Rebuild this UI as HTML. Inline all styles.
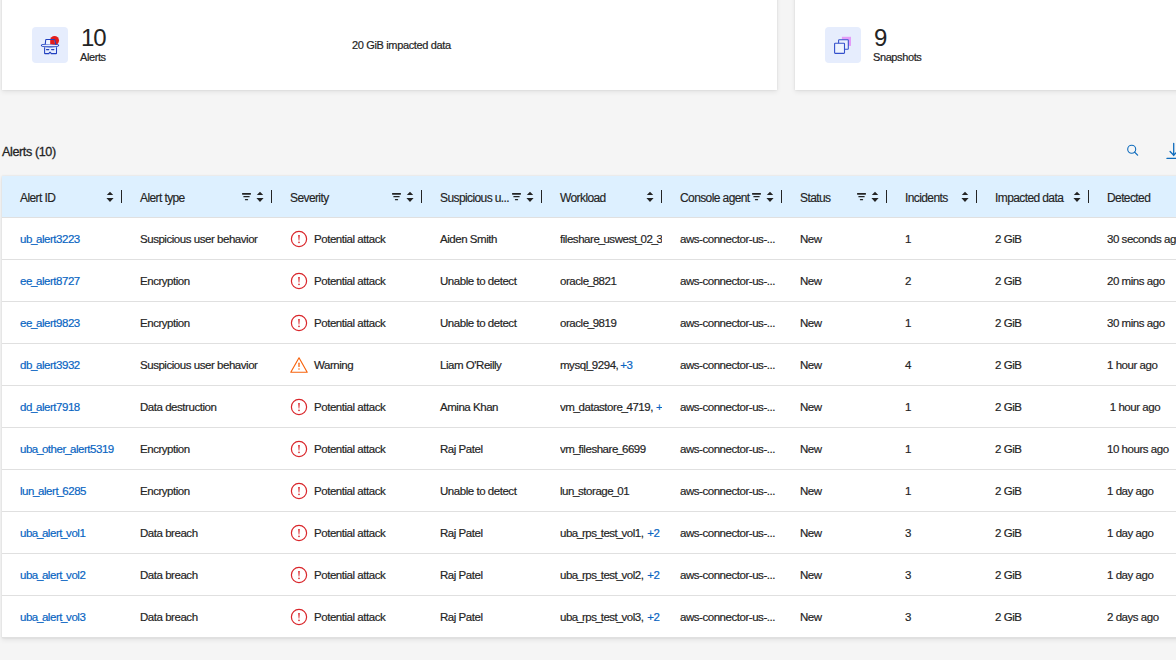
<!DOCTYPE html>
<html><head><meta charset="utf-8"><style>
*{box-sizing:border-box}
html,body{margin:0;padding:0}
body{width:1176px;height:660px;overflow:hidden;position:relative;background:#f5f5f5;font-family:"Liberation Sans",sans-serif;color:#242424}
.a{position:absolute;white-space:nowrap}
.card{position:absolute;background:#fff;box-shadow:0 0 2px rgba(0,0,0,.09),0 2px 5px rgba(0,0,0,.08)}
.ibox{position:absolute;width:36px;height:36px;border-radius:4px;background:#e6edfd}
.tbl{position:absolute;left:2px;top:176px;width:1200px;height:462px;background:#fff;box-shadow:0 0 2px rgba(0,0,0,.09),0 2px 5px rgba(0,0,0,.08)}
.hdr{position:absolute;left:0;top:0;width:1200px;height:42px;background:#ddf0ff;border-bottom:1px solid #e0e0e0}
.row{position:absolute;left:0;width:1200px;height:42px;border-bottom:1px solid #e0e0e0}
.ht{position:absolute;top:2px;height:41px;line-height:41px;font-size:12px;letter-spacing:-0.6px;color:#242424;white-space:nowrap;-webkit-text-stroke:0.15px #242424}
.bt{position:absolute;top:1px;height:41px;line-height:41px;font-size:11.5px;letter-spacing:-0.46px;color:#242424;white-space:nowrap;-webkit-text-stroke:0.18px currentColor}
.clip{overflow:hidden}
.lnk{color:#0864c2}
.u{margin-left:-0.9px;letter-spacing:-1.4px}
.div{position:absolute;top:14px;width:1.2px;height:13px;background:#242424}
.ic{position:absolute}
.ic svg{display:block}
</style></head><body>

<div class="card" style="left:2px;top:-10px;width:775px;height:100px"></div>
<div class="card" style="left:795px;top:-10px;width:400px;height:100px"></div>
<div class="ibox" style="left:32px;top:27px"><svg width="36" height="36" viewBox="0 0 36 36" style="position:absolute;left:0;top:0"><circle cx="22.55" cy="13.45" r="4.5" fill="#e31b1b"/><ellipse cx="18" cy="18.4" rx="8.7" ry="1.45" fill="none" stroke="#2140c0" stroke-width="1.05"/><path d="M13.85 17.3 L14.2 13 L22.3 13 L23.2 17.3 Z" fill="#eef3fe"/><path d="M18.2 13 L22.3 13 L23.2 17.3 L18.2 17.3 Z" fill="#e31b1b"/><path d="M13.3 17.1 L13.7 12.9 C13.75 12.6 13.9 12.5 14.2 12.5 L22.3 12.5 C22.6 12.5 22.75 12.7 22.8 13 L23.7 17.2" fill="none" stroke="#2140c0" stroke-width="1.05" stroke-linejoin="round"/><path d="M12.6 20.3 L12.6 26.2 C12.6 26.5 12.8 26.6 13.1 26.6 L16.9 26.6 L17.7 25.3 L18.4 25.3 L19.2 26.6 L24 26.6 C24.3 26.6 24.5 26.5 24.5 26.2 L24.5 20.3" fill="none" stroke="#2140c0" stroke-width="1.05" stroke-linejoin="round"/><path d="M14.5 22.6 H16.8 M19.6 22.6 H21.9" stroke="#2140c0" stroke-width="1.1" stroke-linecap="round"/></svg></div>
<div class="a" style="left:81px;top:24px;font-size:24px;line-height:28px;letter-spacing:-1.2px;color:#242424">10</div>
<div class="a" style="left:80px;top:51px;font-size:11px;line-height:13px;letter-spacing:-0.4px;color:#242424;-webkit-text-stroke:0.2px #242424">Alerts</div>
<div class="a" style="left:352px;top:39px;font-size:11px;line-height:13px;letter-spacing:-0.35px;color:#242424;-webkit-text-stroke:0.2px #242424">20 GiB impacted data</div>
<div class="ibox" style="left:825px;top:27px"><svg width="36" height="36" viewBox="0 0 36 36" style="position:absolute;left:0;top:0"><rect x="16.9" y="9.8" width="9.1" height="9.1" fill="#e39cf8"/><rect x="13.6" y="12.7" width="9.7" height="9.6" rx=".6" fill="#eaf0fe" stroke="#3450cc" stroke-width="1.05"/><rect x="9.6" y="16.3" width="9.9" height="10.1" rx=".6" fill="#eef3fe" stroke="#3450cc" stroke-width="1.1"/></svg></div>
<div class="a" style="left:874px;top:24px;font-size:24px;line-height:28px;color:#242424">9</div>
<div class="a" style="left:873px;top:51px;font-size:11px;line-height:13px;letter-spacing:-0.4px;color:#242424;-webkit-text-stroke:0.2px #242424">Snapshots</div>
<div class="a" style="left:2px;top:145px;font-size:12.6px;line-height:14px;letter-spacing:-0.4px;color:#242424;-webkit-text-stroke:0.3px #242424">Alerts (10)</div>
<svg class="ic" style="left:1124px;top:141px" width="18" height="18" viewBox="0 0 18 18"><circle cx="7.7" cy="8.2" r="4.0" fill="none" stroke="#0f6cbd" stroke-width="1.1"/><path d="M10.6 11.1 L13.6 14.1" stroke="#0f6cbd" stroke-width="1.3" stroke-linecap="round"/></svg>
<svg class="ic" style="left:1160px;top:140px" width="16" height="20" viewBox="0 0 16 20"><path d="M13.7 3.3 V15.5 M10.1 11.5 L13.7 15.2 L17.3 11.5" fill="none" stroke="#0f6cbd" stroke-width="1.3" stroke-linecap="round"/><path d="M7 18.4 H20" stroke="#0f6cbd" stroke-width="1.4" stroke-linecap="round"/></svg>
<div class="tbl">
<div class="hdr">
<div class="ht" style="left:18px">Alert ID</div>
<div class="div" style="left:119.0px"></div>
<div class="ic" style="left:104.0px;top:15px"><svg width="8" height="12" viewBox="0 0 8 12"><path d="M4 0.8 L7.2 3.9 L0.8 3.9 Z M0.4 7.1 L7.6 7.1 L4 10.9 Z" fill="#242424"/></svg></div>
<div class="ht" style="left:138px">Alert type</div>
<div class="div" style="left:269.0px"></div>
<div class="ic" style="left:254.0px;top:15px"><svg width="8" height="12" viewBox="0 0 8 12"><path d="M4 0.8 L7.2 3.9 L0.8 3.9 Z M0.4 7.1 L7.6 7.1 L4 10.9 Z" fill="#242424"/></svg></div>
<div class="ic" style="left:240.0px;top:16px"><svg width="10" height="9" viewBox="0 0 10 9"><rect x="0" y="1" width="9" height="1.7" rx=".6" fill="#242424"/><rect x="1.3" y="4" width="6.4" height="1.3" rx=".5" fill="#242424"/><rect x="2.9" y="7.1" width="3.2" height="1.2" rx=".5" fill="#242424"/></svg></div>
<div class="ht" style="left:288px">Severity</div>
<div class="div" style="left:419.0px"></div>
<div class="ic" style="left:404.0px;top:15px"><svg width="8" height="12" viewBox="0 0 8 12"><path d="M4 0.8 L7.2 3.9 L0.8 3.9 Z M0.4 7.1 L7.6 7.1 L4 10.9 Z" fill="#242424"/></svg></div>
<div class="ic" style="left:390.0px;top:16px"><svg width="10" height="9" viewBox="0 0 10 9"><rect x="0" y="1" width="9" height="1.7" rx=".6" fill="#242424"/><rect x="1.3" y="4" width="6.4" height="1.3" rx=".5" fill="#242424"/><rect x="2.9" y="7.1" width="3.2" height="1.2" rx=".5" fill="#242424"/></svg></div>
<div class="ht" style="left:438px">Suspicious u...</div>
<div class="div" style="left:539.0px"></div>
<div class="ic" style="left:524.0px;top:15px"><svg width="8" height="12" viewBox="0 0 8 12"><path d="M4 0.8 L7.2 3.9 L0.8 3.9 Z M0.4 7.1 L7.6 7.1 L4 10.9 Z" fill="#242424"/></svg></div>
<div class="ic" style="left:510.0px;top:16px"><svg width="10" height="9" viewBox="0 0 10 9"><rect x="0" y="1" width="9" height="1.7" rx=".6" fill="#242424"/><rect x="1.3" y="4" width="6.4" height="1.3" rx=".5" fill="#242424"/><rect x="2.9" y="7.1" width="3.2" height="1.2" rx=".5" fill="#242424"/></svg></div>
<div class="ht" style="left:558px">Workload</div>
<div class="div" style="left:659.0px"></div>
<div class="ic" style="left:644.0px;top:15px"><svg width="8" height="12" viewBox="0 0 8 12"><path d="M4 0.8 L7.2 3.9 L0.8 3.9 Z M0.4 7.1 L7.6 7.1 L4 10.9 Z" fill="#242424"/></svg></div>
<div class="ht" style="left:678px">Console agent</div>
<div class="div" style="left:779.0px"></div>
<div class="ic" style="left:764.0px;top:15px"><svg width="8" height="12" viewBox="0 0 8 12"><path d="M4 0.8 L7.2 3.9 L0.8 3.9 Z M0.4 7.1 L7.6 7.1 L4 10.9 Z" fill="#242424"/></svg></div>
<div class="ic" style="left:750.0px;top:16px"><svg width="10" height="9" viewBox="0 0 10 9"><rect x="0" y="1" width="9" height="1.7" rx=".6" fill="#242424"/><rect x="1.3" y="4" width="6.4" height="1.3" rx=".5" fill="#242424"/><rect x="2.9" y="7.1" width="3.2" height="1.2" rx=".5" fill="#242424"/></svg></div>
<div class="ht" style="left:798px">Status</div>
<div class="div" style="left:884.0px"></div>
<div class="ic" style="left:869.0px;top:15px"><svg width="8" height="12" viewBox="0 0 8 12"><path d="M4 0.8 L7.2 3.9 L0.8 3.9 Z M0.4 7.1 L7.6 7.1 L4 10.9 Z" fill="#242424"/></svg></div>
<div class="ic" style="left:855.0px;top:16px"><svg width="10" height="9" viewBox="0 0 10 9"><rect x="0" y="1" width="9" height="1.7" rx=".6" fill="#242424"/><rect x="1.3" y="4" width="6.4" height="1.3" rx=".5" fill="#242424"/><rect x="2.9" y="7.1" width="3.2" height="1.2" rx=".5" fill="#242424"/></svg></div>
<div class="ht" style="left:903px">Incidents</div>
<div class="div" style="left:974.0px"></div>
<div class="ic" style="left:959.0px;top:15px"><svg width="8" height="12" viewBox="0 0 8 12"><path d="M4 0.8 L7.2 3.9 L0.8 3.9 Z M0.4 7.1 L7.6 7.1 L4 10.9 Z" fill="#242424"/></svg></div>
<div class="ht" style="left:993px">Impacted data</div>
<div class="div" style="left:1086.0px"></div>
<div class="ic" style="left:1071.0px;top:15px"><svg width="8" height="12" viewBox="0 0 8 12"><path d="M4 0.8 L7.2 3.9 L0.8 3.9 Z M0.4 7.1 L7.6 7.1 L4 10.9 Z" fill="#242424"/></svg></div>
<div class="ht" style="left:1105px">Detected</div>
</div>
<div class="row" style="top:42px">
<div class="bt lnk" style="left:18px">ub<span class="u">_</span>alert3223</div>
<div class="bt" style="left:138px">Suspicious user behavior</div>
<div class="ic" style="left:288px;top:12px"><svg width="18" height="18" viewBox="0 0 18 18"><circle cx="9" cy="9" r="7.6" fill="none" stroke="#d9262b" stroke-width="1.2"/><path d="M8.2 5 L9.8 5 L9.35 10.6 L8.65 10.6 Z" fill="#d9262b"/><circle cx="9" cy="12.4" r=".8" fill="#d9262b"/></svg></div>
<div class="bt" style="left:312px">Potential attack</div>
<div class="bt" style="left:438px">Aiden Smith</div>
<div class="bt clip" style="left:558px;width:102px">fileshare<span class="u">_</span>uswest<span class="u">_</span>02<span class="u">_</span>32a</div>
<div class="bt" style="left:678px">aws-connector-us-...</div>
<div class="bt" style="left:798px">New</div>
<div class="bt" style="left:903px">1</div>
<div class="bt" style="left:993px">2 GiB</div>
<div class="bt" style="left:1105px">30 seconds ago</div>
</div>
<div class="row" style="top:84px">
<div class="bt lnk" style="left:18px">ee<span class="u">_</span>alert8727</div>
<div class="bt" style="left:138px">Encryption</div>
<div class="ic" style="left:288px;top:12px"><svg width="18" height="18" viewBox="0 0 18 18"><circle cx="9" cy="9" r="7.6" fill="none" stroke="#d9262b" stroke-width="1.2"/><path d="M8.2 5 L9.8 5 L9.35 10.6 L8.65 10.6 Z" fill="#d9262b"/><circle cx="9" cy="12.4" r=".8" fill="#d9262b"/></svg></div>
<div class="bt" style="left:312px">Potential attack</div>
<div class="bt" style="left:438px">Unable to detect</div>
<div class="bt clip" style="left:558px;width:102px">oracle<span class="u">_</span>8821</div>
<div class="bt" style="left:678px">aws-connector-us-...</div>
<div class="bt" style="left:798px">New</div>
<div class="bt" style="left:903px">2</div>
<div class="bt" style="left:993px">2 GiB</div>
<div class="bt" style="left:1105px">20 mins ago</div>
</div>
<div class="row" style="top:126px">
<div class="bt lnk" style="left:18px">ee<span class="u">_</span>alert9823</div>
<div class="bt" style="left:138px">Encryption</div>
<div class="ic" style="left:288px;top:12px"><svg width="18" height="18" viewBox="0 0 18 18"><circle cx="9" cy="9" r="7.6" fill="none" stroke="#d9262b" stroke-width="1.2"/><path d="M8.2 5 L9.8 5 L9.35 10.6 L8.65 10.6 Z" fill="#d9262b"/><circle cx="9" cy="12.4" r=".8" fill="#d9262b"/></svg></div>
<div class="bt" style="left:312px">Potential attack</div>
<div class="bt" style="left:438px">Unable to detect</div>
<div class="bt clip" style="left:558px;width:102px">oracle<span class="u">_</span>9819</div>
<div class="bt" style="left:678px">aws-connector-us-...</div>
<div class="bt" style="left:798px">New</div>
<div class="bt" style="left:903px">1</div>
<div class="bt" style="left:993px">2 GiB</div>
<div class="bt" style="left:1105px">30 mins ago</div>
</div>
<div class="row" style="top:168px">
<div class="bt lnk" style="left:18px">db<span class="u">_</span>alert3932</div>
<div class="bt" style="left:138px">Suspicious user behavior</div>
<div class="ic" style="left:287px;top:12px"><svg width="20" height="18" viewBox="0 0 20 18"><path d="M10 1.8 L18.2 16.2 L1.8 16.2 Z" fill="none" stroke="#f7630c" stroke-width="1.15" stroke-linejoin="round"/><rect x="9.35" y="6.6" width="1.3" height="4.4" rx=".6" fill="#f7630c"/><circle cx="10" cy="13.1" r=".75" fill="#f7630c"/></svg></div>
<div class="bt" style="left:312px">Warning</div>
<div class="bt" style="left:438px">Liam O'Reilly</div>
<div class="bt clip" style="left:558px;width:102px">mysql<span class="u">_</span>9294, </div>
<div class="bt lnk clip" style="left:618.3px;width:41.7px">+3</div>
<div class="bt" style="left:678px">aws-connector-us-...</div>
<div class="bt" style="left:798px">New</div>
<div class="bt" style="left:903px">4</div>
<div class="bt" style="left:993px">2 GiB</div>
<div class="bt" style="left:1105px">1 hour ago</div>
</div>
<div class="row" style="top:210px">
<div class="bt lnk" style="left:18px">dd<span class="u">_</span>alert7918</div>
<div class="bt" style="left:138px">Data destruction</div>
<div class="ic" style="left:288px;top:12px"><svg width="18" height="18" viewBox="0 0 18 18"><circle cx="9" cy="9" r="7.6" fill="none" stroke="#d9262b" stroke-width="1.2"/><path d="M8.2 5 L9.8 5 L9.35 10.6 L8.65 10.6 Z" fill="#d9262b"/><circle cx="9" cy="12.4" r=".8" fill="#d9262b"/></svg></div>
<div class="bt" style="left:312px">Potential attack</div>
<div class="bt" style="left:438px">Amina Khan</div>
<div class="bt clip" style="left:558px;width:102px">vm<span class="u">_</span>datastore<span class="u">_</span>4719, </div>
<div class="bt lnk clip" style="left:654px;width:6.0px">+2</div>
<div class="bt" style="left:678px">aws-connector-us-...</div>
<div class="bt" style="left:798px">New</div>
<div class="bt" style="left:903px">1</div>
<div class="bt" style="left:993px">2 GiB</div>
<div class="bt" style="left:1105px">&nbsp;1 hour ago</div>
</div>
<div class="row" style="top:252px">
<div class="bt lnk" style="left:18px">uba<span class="u">_</span>other<span class="u">_</span>alert5319</div>
<div class="bt" style="left:138px">Encryption</div>
<div class="ic" style="left:288px;top:12px"><svg width="18" height="18" viewBox="0 0 18 18"><circle cx="9" cy="9" r="7.6" fill="none" stroke="#d9262b" stroke-width="1.2"/><path d="M8.2 5 L9.8 5 L9.35 10.6 L8.65 10.6 Z" fill="#d9262b"/><circle cx="9" cy="12.4" r=".8" fill="#d9262b"/></svg></div>
<div class="bt" style="left:312px">Potential attack</div>
<div class="bt" style="left:438px">Raj Patel</div>
<div class="bt clip" style="left:558px;width:102px">vm<span class="u">_</span>fileshare<span class="u">_</span>6699</div>
<div class="bt" style="left:678px">aws-connector-us-...</div>
<div class="bt" style="left:798px">New</div>
<div class="bt" style="left:903px">1</div>
<div class="bt" style="left:993px">2 GiB</div>
<div class="bt" style="left:1105px">10 hours ago</div>
</div>
<div class="row" style="top:294px">
<div class="bt lnk" style="left:18px">lun<span class="u">_</span>alert<span class="u">_</span>6285</div>
<div class="bt" style="left:138px">Encryption</div>
<div class="ic" style="left:288px;top:12px"><svg width="18" height="18" viewBox="0 0 18 18"><circle cx="9" cy="9" r="7.6" fill="none" stroke="#d9262b" stroke-width="1.2"/><path d="M8.2 5 L9.8 5 L9.35 10.6 L8.65 10.6 Z" fill="#d9262b"/><circle cx="9" cy="12.4" r=".8" fill="#d9262b"/></svg></div>
<div class="bt" style="left:312px">Potential attack</div>
<div class="bt" style="left:438px">Unable to detect</div>
<div class="bt clip" style="left:558px;width:102px">lun<span class="u">_</span>storage<span class="u">_</span>01</div>
<div class="bt" style="left:678px">aws-connector-us-...</div>
<div class="bt" style="left:798px">New</div>
<div class="bt" style="left:903px">1</div>
<div class="bt" style="left:993px">2 GiB</div>
<div class="bt" style="left:1105px">1 day ago</div>
</div>
<div class="row" style="top:336px">
<div class="bt lnk" style="left:18px">uba<span class="u">_</span>alert<span class="u">_</span>vol1</div>
<div class="bt" style="left:138px">Data breach</div>
<div class="ic" style="left:288px;top:12px"><svg width="18" height="18" viewBox="0 0 18 18"><circle cx="9" cy="9" r="7.6" fill="none" stroke="#d9262b" stroke-width="1.2"/><path d="M8.2 5 L9.8 5 L9.35 10.6 L8.65 10.6 Z" fill="#d9262b"/><circle cx="9" cy="12.4" r=".8" fill="#d9262b"/></svg></div>
<div class="bt" style="left:312px">Potential attack</div>
<div class="bt" style="left:438px">Raj Patel</div>
<div class="bt clip" style="left:558px;width:102px">uba<span class="u">_</span>rps<span class="u">_</span>test<span class="u">_</span>vol1, </div>
<div class="bt lnk clip" style="left:645.3px;width:14.7px">+2</div>
<div class="bt" style="left:678px">aws-connector-us-...</div>
<div class="bt" style="left:798px">New</div>
<div class="bt" style="left:903px">3</div>
<div class="bt" style="left:993px">2 GiB</div>
<div class="bt" style="left:1105px">1 day ago</div>
</div>
<div class="row" style="top:378px">
<div class="bt lnk" style="left:18px">uba<span class="u">_</span>alert<span class="u">_</span>vol2</div>
<div class="bt" style="left:138px">Data breach</div>
<div class="ic" style="left:288px;top:12px"><svg width="18" height="18" viewBox="0 0 18 18"><circle cx="9" cy="9" r="7.6" fill="none" stroke="#d9262b" stroke-width="1.2"/><path d="M8.2 5 L9.8 5 L9.35 10.6 L8.65 10.6 Z" fill="#d9262b"/><circle cx="9" cy="12.4" r=".8" fill="#d9262b"/></svg></div>
<div class="bt" style="left:312px">Potential attack</div>
<div class="bt" style="left:438px">Raj Patel</div>
<div class="bt clip" style="left:558px;width:102px">uba<span class="u">_</span>rps<span class="u">_</span>test<span class="u">_</span>vol2, </div>
<div class="bt lnk clip" style="left:645.3px;width:14.7px">+2</div>
<div class="bt" style="left:678px">aws-connector-us-...</div>
<div class="bt" style="left:798px">New</div>
<div class="bt" style="left:903px">3</div>
<div class="bt" style="left:993px">2 GiB</div>
<div class="bt" style="left:1105px">1 day ago</div>
</div>
<div class="row" style="top:420px">
<div class="bt lnk" style="left:18px">uba<span class="u">_</span>alert<span class="u">_</span>vol3</div>
<div class="bt" style="left:138px">Data breach</div>
<div class="ic" style="left:288px;top:12px"><svg width="18" height="18" viewBox="0 0 18 18"><circle cx="9" cy="9" r="7.6" fill="none" stroke="#d9262b" stroke-width="1.2"/><path d="M8.2 5 L9.8 5 L9.35 10.6 L8.65 10.6 Z" fill="#d9262b"/><circle cx="9" cy="12.4" r=".8" fill="#d9262b"/></svg></div>
<div class="bt" style="left:312px">Potential attack</div>
<div class="bt" style="left:438px">Raj Patel</div>
<div class="bt clip" style="left:558px;width:102px">uba<span class="u">_</span>rps<span class="u">_</span>test<span class="u">_</span>vol3, </div>
<div class="bt lnk clip" style="left:645.3px;width:14.7px">+2</div>
<div class="bt" style="left:678px">aws-connector-us-...</div>
<div class="bt" style="left:798px">New</div>
<div class="bt" style="left:903px">3</div>
<div class="bt" style="left:993px">2 GiB</div>
<div class="bt" style="left:1105px">2 days ago</div>
</div>
</div>
</body></html>
